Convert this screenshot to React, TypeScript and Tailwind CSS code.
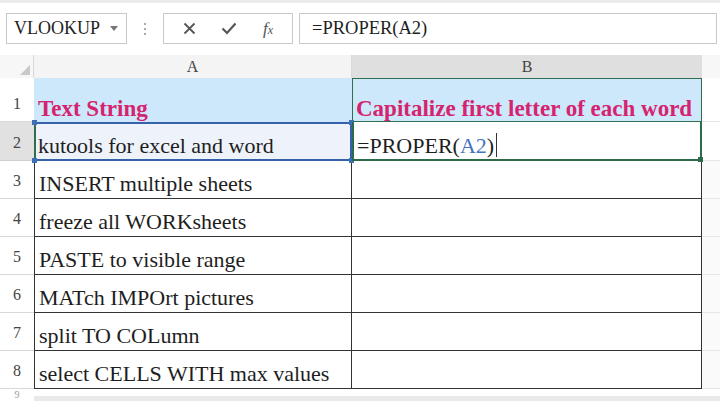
const rows = [
  'INSERT multiple sheets',
  'freeze all WORKsheets',
  'PASTE to visible range',
  'MATch IMPOrt pictures',
  'split TO COLumn',
  'select CELLS WITH max values',
];

function Corner({ className }: { className: string }) {
  return <span className={`absolute w-[5px] h-[5px] bg-[#3b6fb6] ${className}`} />;
}

export default function App() {
  return (
    <div className="w-[720px] h-[401px] bg-white overflow-hidden text-[#1e1e1e] font-['Liberation_Serif','Times_New_Roman',serif]">
      <div className="h-[3px] bg-[#ececec]" />

      {/* formula bar */}
      <div className="flex items-center h-[41px] pt-[10px] pl-[6px] pr-[3px]">
        <div className="flex items-center justify-between w-[121px] h-[31px] border border-[#c9c9c9] pl-[7px] pr-[8px]">
          <span className="text-[18px]">VLOOKUP</span>
          <svg width="8" height="5" viewBox="0 0 8 5">
            <path d="M0 0 L8 0 L4 5 Z" fill="#777" />
          </svg>
        </div>
        <div className="w-[36px] flex flex-col items-center gap-[3px]">
          <span className="w-[2px] h-[2px] bg-[#aaa]" />
          <span className="w-[2px] h-[2px] bg-[#aaa]" />
          <span className="w-[2px] h-[2px] bg-[#aaa]" />
        </div>
        <div className="flex items-center justify-around w-[130px] h-[31px] border border-[#c9c9c9] px-[6px]">
          <svg width="13" height="13" viewBox="0 0 13 13">
            <path d="M1.5 1.5 L11.5 11.5 M11.5 1.5 L1.5 11.5" stroke="#555" strokeWidth="1.8" />
          </svg>
          <svg width="16" height="13" viewBox="0 0 16 13">
            <path d="M1.5 6.5 L6 11 L14.5 1.5" stroke="#555" strokeWidth="2.2" fill="none" />
          </svg>
          <span className="text-[17px] italic text-[#555]">
            f<span className="text-[12px]">x</span>
          </span>
        </div>
        <div className="flex items-center flex-1 h-[31px] border border-[#c9c9c9] ml-[6px] pl-[12px]">
          <span className="text-[18.5px]">=PROPER(A2)</span>
        </div>
      </div>

      <div className="h-[11px]" />

      {/* column headers */}
      <div className="flex h-[23px] text-[16px] text-[#444]">
        <div className="relative w-[34px] bg-[#f7f7f7] border-r border-[#d8d8d8]">
          <svg className="absolute right-[3px] bottom-[3px]" width="10" height="10" viewBox="0 0 10 10">
            <path d="M10 0 L10 10 L0 10 Z" fill="#c8c8c8" />
          </svg>
        </div>
        <div className="w-[318px] bg-[#f4f4f4] flex items-center justify-center border-r border-[#d8d8d8]">A</div>
        <div className="w-[350px] bg-[#dfdfdf] flex items-center justify-center">B</div>
        <div className="flex-1 bg-[#f7f7f7]" />
      </div>

      {/* row 1 */}
      <div className="flex h-[44px] leading-none">
        <div className="w-[34px] flex items-end justify-center pb-[9px] text-[16px] text-[#444] border-b border-[#d8d8d8]">1</div>
        <div className="w-[318px] bg-[#cde8fa] flex items-end pl-[4px] pb-[2px] text-[23px] font-bold text-[#d5236f]">
          Text String
        </div>
        <div className="w-[350px] bg-[#cde8fa] flex items-end pl-[3px] pb-[1px] text-[23px] font-bold text-[#d5236f] border border-[#2f6f50] whitespace-nowrap">
          Capitalize first letter of each word
        </div>
        <div className="flex-1 border-b border-[#e6e6e6]" />
      </div>

      {/* row 2 */}
      <div className="flex h-[39px] leading-none">
        <div className="w-[34px] bg-[#e1e1e1] flex items-end justify-center pb-[9px] text-[16px] text-[#444] border-b border-[#cfcfcf]">2</div>
        <div className="relative w-[318px] bg-[#eef2fb] flex items-end pl-[4px] pb-[4px] text-[22px]">
          <div className="absolute inset-0 border-2 border-[#3561a8] border-l-[#2f6f50]" />
          <Corner className="-left-[2px] -top-[2px]" />
          <Corner className="-right-[2px] -top-[2px]" />
          <Corner className="-left-[2px] -bottom-[2px]" />
          <Corner className="-right-[2px] -bottom-[2px]" />
          <span className="relative">kutools for excel and word</span>
        </div>
        <div className="relative w-[350px] flex items-end pl-[3px] pb-[2px] text-[22px] border-2 border-t-0 border-[#2b6a4a]">
          =PROPER(<span className="text-[#4472c4]">A2</span>)
          <span className="w-[1px] h-[24px] bg-[#333] ml-[2px]" />
          <span className="absolute -right-[3px] -bottom-[3px] w-[5px] h-[5px] bg-[#2b6a4a]" />
        </div>
        <div className="flex-1 border-b border-[#e6e6e6]" />
      </div>

      {/* rows 3-8 */}
      {rows.map((text, i) => (
        <div key={i} className="flex h-[38px] leading-none">
          <div className="w-[34px] flex items-end justify-center pb-[9px] text-[16px] text-[#444] border-b border-[#d8d8d8]">
            {i + 3}
          </div>
          <div className="w-[318px] flex items-end pl-[4px] pb-[3px] text-[22px] border-l border-r border-b border-[#333]">
            {text}
          </div>
          <div className="w-[350px] border-r border-b border-[#333]" />
          <div className="flex-1 border-b border-[#e6e6e6] bg-[#fafafa]" />
        </div>
      ))}

      {/* row 9 partial */}
      <div className="flex h-[12px]">
        <div className="w-[34px] flex justify-center text-[10px] text-[#999] leading-none pt-[1px]">9</div>
        <div className="flex-1 bg-[#e9e9e9] mt-[7px]" />
      </div>
    </div>
  );
}
